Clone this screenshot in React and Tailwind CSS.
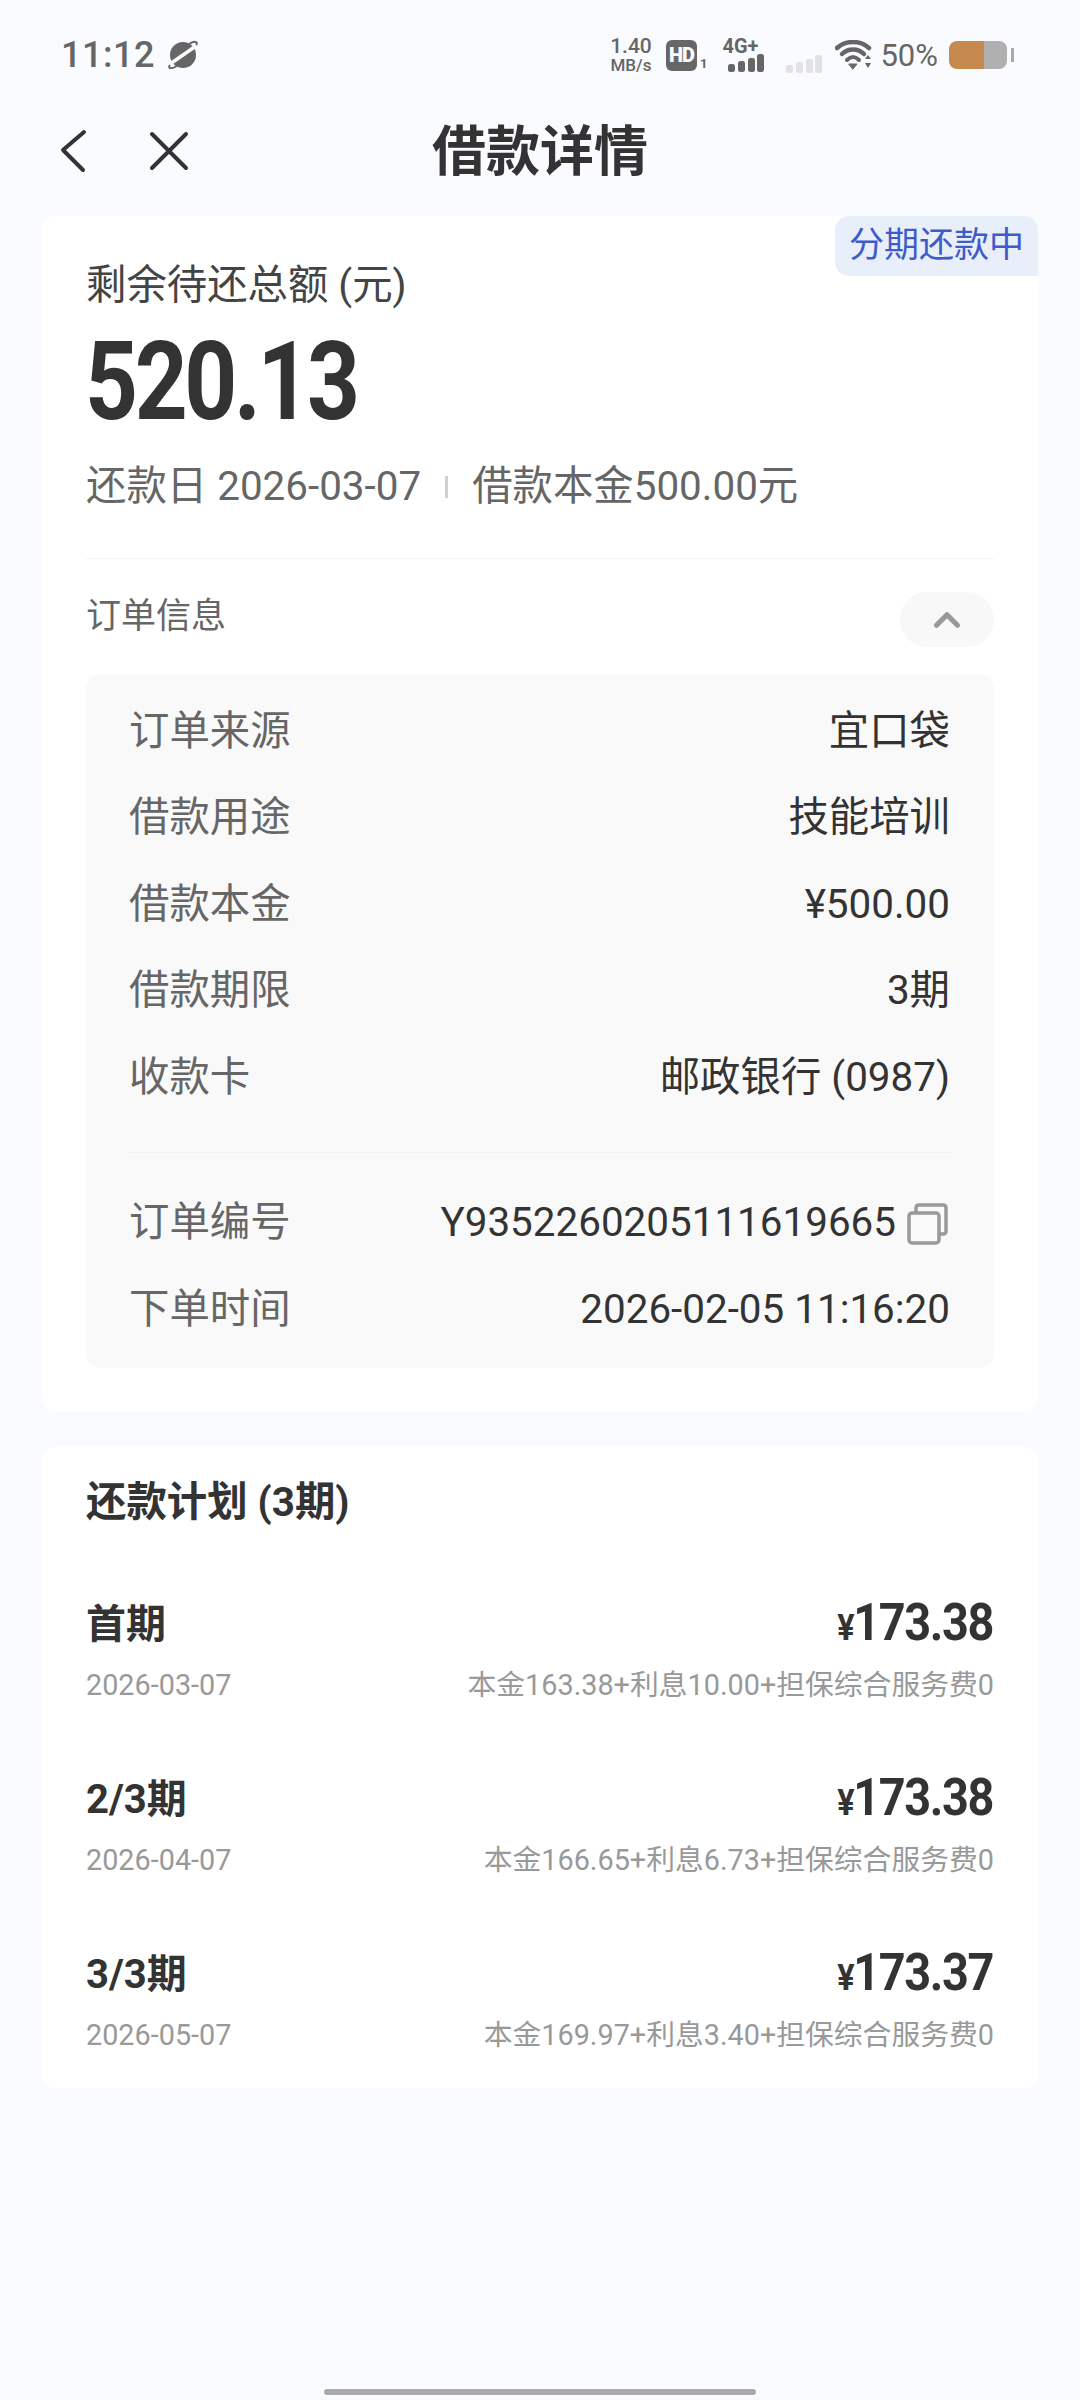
import { ChevronUp } from 'lucide-react';

const font = { fontFamily: 'Roboto, "Noto Sans CJK SC", sans-serif' };

const orderRows = [
  { label: '订单来源', value: '宜口袋' },
  { label: '借款用途', value: '技能培训' },
  { label: '借款本金', value: '¥500.00' },
  { label: '借款期限', value: '3期' },
  { label: '收款卡', value: '邮政银行 (0987)' },
];

const plan = [
  { name: '首期', amount: '173.38', date: '2026-03-07', detail: '本金163.38+利息10.00+担保综合服务费0' },
  { name: '2/3期', amount: '173.38', date: '2026-04-07', detail: '本金166.65+利息6.73+担保综合服务费0' },
  { name: '3/3期', amount: '173.37', date: '2026-05-07', detail: '本金169.97+利息3.40+担保综合服务费0' },
];

const Bars = ({ color }) => (
  <svg width="36" height="18" viewBox="0 0 36 18" fill={color}>
    <rect x="0" y="10" width="7" height="8" rx="2.5" />
    <rect x="10" y="7" width="7" height="11" rx="2.5" />
    <rect x="20" y="4" width="7" height="14" rx="2.5" />
    <rect x="29" y="0" width="7" height="18" rx="2.5" />
  </svg>
);

const StatusBar = () => (
  <div className="flex h-[108px] items-center justify-between pl-[61px] pr-[66px] pt-[2px] text-[#666666]">
    <div className="flex items-center gap-[12px]">
      <span className="text-[36px] font-medium tracking-[0.5px]">11:12</span>
      <svg width="32" height="30" viewBox="0 0 32 30" fill="#666666">
        <ellipse cx="16" cy="15" rx="13" ry="13" />
        <path d="M3 24 L29 6" stroke="#fafbff" strokeWidth="3.5" fill="none" />
        <path d="M3 25 C0 29 5 29 10 26 M29 5 C32 1 27 1 22 4" stroke="#666666" strokeWidth="2" fill="none" />
      </svg>
    </div>
    <div className="flex items-center">
      <div className="flex w-[44px] flex-col items-center leading-none">
        <span className="text-[21px] font-medium leading-[19px]">1.40</span>
        <span className="whitespace-nowrap text-[17px] font-medium leading-[18px]">MB/s</span>
      </div>
      <div className="ml-[13px] flex items-end">
        <span className="flex h-[31px] w-[31px] items-center justify-center rounded-[6px] bg-[#666666] text-[20px] font-black tracking-[-1px] text-[#fafbff]">HD</span>
        <span className="ml-[3px] text-[13px] font-bold leading-[14px]">1</span>
      </div>
      <div className="ml-[13px] flex w-[44px] flex-col items-end">
        <span className="mr-[6px] text-[20px] font-bold leading-[16px]">4G+</span>
        <Bars color="#666666" />
      </div>
      <div className="ml-[22px] self-end pb-[1px]">
        <Bars color="#e2e2e2" />
      </div>
      <svg className="ml-[13px]" width="37" height="30" viewBox="0 0 37 30" fill="none" stroke="#666666" strokeLinecap="round">
        <path d="M2 8 C11 0 25 0 34 8" strokeWidth="4.5" />
        <path d="M7 14 C13 8 23 8 29 14" strokeWidth="4.5" />
        <path d="M12 20 C16 16 20 16 24 20" strokeWidth="4" />
        <path d="M14 24 L22 24 L18 29 Z" fill="#666666" strokeWidth="1" />
        <path d="M30 19 L36 19 L33 15 Z M30 23 L36 23 L33 28 Z" fill="#666666" stroke="none" />
      </svg>
      <span className="ml-[8px] text-[31px] leading-none">50%</span>
      <div className="ml-[11px] flex h-[28px] w-[58px] overflow-hidden rounded-[8px]">
        <div className="w-[35px] bg-[#c68a4e]" />
        <div className="flex-1 bg-[#b0b0b0]" />
      </div>
      <div className="ml-[4px] h-[14px] w-[3px] bg-[#aaaaaa]" />
    </div>
  </div>
);

const NavBar = () => (
  <div className="relative flex h-[108px] items-start justify-center">
    <div className="absolute left-[59px] top-[20px] flex items-center gap-[59px]">
      <svg width="30" height="46" viewBox="0 0 30 46" fill="none" stroke="#333333" strokeWidth="4" strokeLinecap="round" strokeLinejoin="round">
        <path d="M25 4 L4 22 L24 42" />
      </svg>
      <svg width="42" height="42" viewBox="0 0 42 42" fill="none" stroke="#333333" strokeWidth="4" strokeLinecap="round">
        <path d="M4 4 L38 38 M38 4 L4 38" />
      </svg>
    </div>
    <h1 className="pt-[9px] text-[54px] font-bold leading-[72px] text-[#333333]">借款详情</h1>
  </div>
);

const InfoRow = ({ label, children }) => (
  <div className="flex h-[86.5px] items-center justify-between text-[40.4px]">
    <span className="text-[#666666]">{label}</span>
    <span className="flex items-center text-[#333333]">{children}</span>
  </div>
);

const CopyIcon = () => (
  <svg className="ml-[12px] -translate-x-[1px]" width="42" height="42" viewBox="0 0 42 42" fill="none" stroke="#999999" strokeWidth="3.5" strokeLinejoin="round">
    <rect x="2" y="10" width="30" height="30" rx="3" />
    <path d="M9 10 V5 Q9 2 12 2 H36 Q39 2 39 5 V28 Q39 31 36 31 H32" />
  </svg>
);

const SummaryCard = () => (
  <section className="relative mx-[42px] rounded-[14px] bg-white pb-[44px] pl-[44px] pr-[44px] pt-[40px]">
    <div className="absolute right-0 top-0 rounded-bl-[14px] rounded-tl-[14px] rounded-tr-[14px] bg-[#e9eefb] px-[14px] py-[6px] text-[35px] leading-[48px] text-[#3d5bc9]">
      分期还款中
    </div>
    <div className="h-[60px] text-[40.4px] leading-[60px] text-[#444444]">剩余待还总额 (元)</div>
    <div className="-ml-[1px] mt-[16px] h-[100px] origin-left scale-x-[0.84] text-[110px] font-bold leading-[100px] tracking-[-4px] text-[#333333]">520.13</div>
    <div className="mt-[25px] flex h-[60px] items-center text-[40.4px] text-[#666666]">
      <span>还款日 2026-03-07</span>
      <span className="mx-[24px] h-[22px] w-[3px] bg-[#d0d0d0]" />
      <span>借款本金500.00元</span>
    </div>
    <div className="mt-[41px] h-px bg-[#f3f3f3]" />
    <div className="mt-[33px] flex h-[55px] items-center justify-between">
      <span className="pb-[4px] text-[35px] text-[#666666]">订单信息</span>
      <span className="flex h-[55px] w-[94px] items-center justify-center rounded-full bg-[#f8f8f8]">
        <ChevronUp size={42} strokeWidth={3} color="#999999" />
      </span>
    </div>
    <div className="mt-[28px] rounded-[14px] bg-[#f9f9f9] pb-[14px] pl-[43px] pr-[44px] pt-[14px]">
      {orderRows.map((row) => (
        <InfoRow key={row.label} label={row.label}>{row.value}</InfoRow>
      ))}
      <div className="mb-[28px] mt-[30px] h-px bg-[#f0f0f0]" />
      <InfoRow label="订单编号">
        Y9352260205111619665
        <CopyIcon />
      </InfoRow>
      <InfoRow label="下单时间">2026-02-05 11:16:20</InfoRow>
    </div>
  </section>
);

const PlanCard = () => (
  <section className="mx-[42px] mt-[35px] rounded-[14px] bg-white pb-[32px] pl-[44px] pr-[44px] pt-[26px]">
    <h2 className="h-[60px] text-[40.4px] font-bold leading-[60px] text-[#333333]">还款计划 (3期)</h2>
    <div className="mt-[62px] flex flex-col gap-[64px]">
      {plan.map((item) => (
        <div key={item.name}>
          <div className="flex h-[60px] items-center justify-between text-[#333333]">
            <span className="text-[40px] font-bold">{item.name}</span>
            <span className="origin-right -translate-x-[1px] scale-x-[0.9] pb-[4px] text-[52px] font-bold tracking-[-1.5px]">
              <span className="text-[36px]">¥</span>
              {item.amount}
            </span>
          </div>
          <div className="mt-[11px] flex h-[40px] items-center justify-between text-[28.8px] text-[#999999]">
            <span>{item.date}</span>
            <span>{item.detail}</span>
          </div>
        </div>
      ))}
    </div>
  </section>
);

export default function App() {
  return (
    <div className="flex h-[2400px] w-[1080px] flex-col overflow-hidden bg-[#fafbff]" style={font}>
      <StatusBar />
      <NavBar />
      <SummaryCard />
      <PlanCard />
      <div className="mx-auto mb-[5px] mt-auto h-[6px] w-[432px] rounded-full bg-[#aaaaaa]" />
    </div>
  );
}
